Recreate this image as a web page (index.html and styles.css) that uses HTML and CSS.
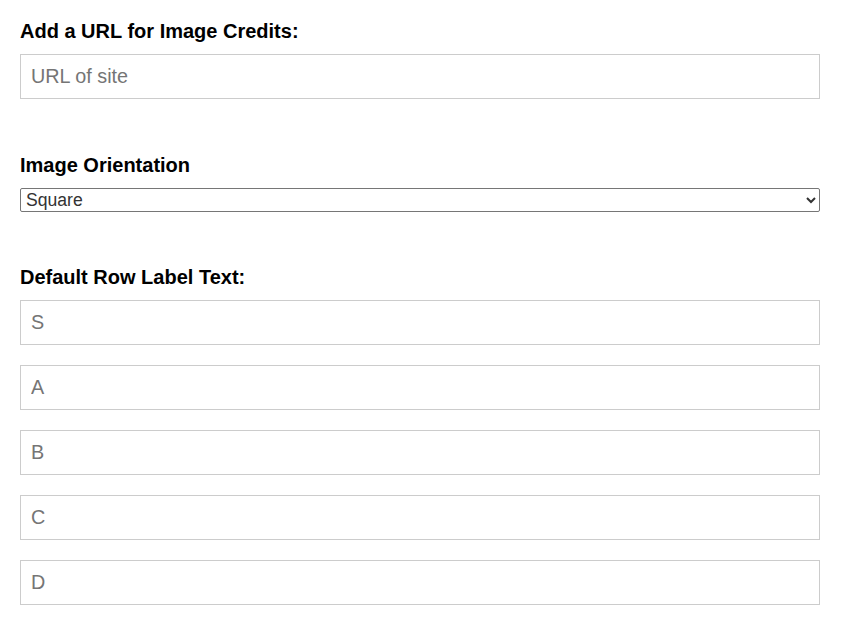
FILE: index.html
```html
<!DOCTYPE html>
<html lang="en">
<head>
<meta charset="utf-8">
<title>Settings</title>
<link rel="stylesheet" href="styles.css">
</head>
<body>
<form class="settings">
  <div class="field field-credits">
    <label class="field-label" for="credits">Add a URL for Image Credits:</label>
    <input class="text-input" id="credits" type="text" placeholder="URL of site">
  </div>
  <div class="field field-orientation">
    <label class="field-label" for="orientation">Image Orientation</label>
    <select class="select-input" id="orientation">
      <option>Square</option>
      <option>Portrait</option>
      <option>Landscape</option>
    </select>
  </div>
  <div class="field field-rows">
    <label class="field-label" for="row-s">Default Row Label Text:</label>
    <div class="row-list">
      <input class="text-input" id="row-s" type="text" placeholder="S">
      <input class="text-input" type="text" placeholder="A">
      <input class="text-input" type="text" placeholder="B">
      <input class="text-input" type="text" placeholder="C">
      <input class="text-input" type="text" placeholder="D">
    </div>
  </div>
</form>
</body>
</html>
```

FILE: styles.css
```css
* {
  box-sizing: border-box;
}

html, body {
  margin: 0;
  padding: 0;
  background: #ffffff;
}

body {
  font-family: "Liberation Sans", Arial, sans-serif;
  color: #000000;
}

.settings {
  width: 800px;
  margin: 0 0 0 20px;
  padding-top: 20px;
  display: flex;
  flex-direction: column;
}

.field {
  display: flex;
  flex-direction: column;
}

.field-credits {
  margin-bottom: 55px;
}

.field-orientation {
  margin-bottom: 54px;
}

.field-label {
  display: block;
  font-size: 20px;
  font-weight: bold;
  line-height: 22px;
  height: 22px;
  margin-bottom: 12px;
}

.text-input {
  display: block;
  width: 800px;
  height: 45px;
  margin: 0;
  padding: 0 10px;
  border: 1px solid #cccccc;
  border-radius: 0;
  font-family: "Liberation Sans", Arial, sans-serif;
  font-size: 19.8px;
  color: #333333;
  background: #ffffff;
  outline: none;
}

.text-input::placeholder {
  color: #757575;
  opacity: 1;
}

.select-input {
  display: block;
  width: 800px;
  height: 24px;
  margin: 0;
  padding: 0 0 0 1px;
  border: 1px solid #767676;
  border-radius: 2px;
  font-family: "Liberation Sans", Arial, sans-serif;
  font-size: 17.6px;
  color: #333333;
  background: #ffffff;
}

.row-list {
  display: flex;
  flex-direction: column;
  gap: 20px;
}
```
